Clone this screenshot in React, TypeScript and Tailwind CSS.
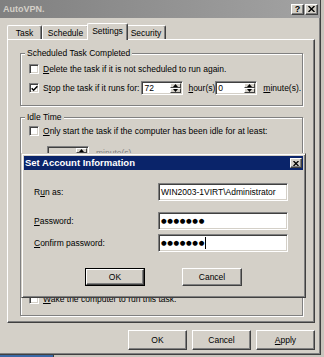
import React from "react";

const sunken =
  "border border-t-[#808080] border-l-[#808080] border-r-white border-b-white shadow-[inset_1px_1px_0_#404040,inset_-1px_-1px_0_#d4d0c8]";
const raised =
  "border border-t-white border-l-white border-r-[#404040] border-b-[#404040] shadow-[inset_-1px_-1px_0_#808080]";

const U = ({ children }: { children: React.ReactNode }) => (
  <span className="underline underline-offset-1">{children}</span>
);

const Check = ({ checked }: { checked?: boolean }) => (
  <span className={`inline-flex w-[10px] h-[10px] shrink-0 items-center justify-center bg-white ${sunken}`}>
    {checked && (
      <svg width="7" height="7" viewBox="0 0 7 7">
        <path d="M0.7 3.2 L2.6 5.2 L6.4 1.2" stroke="#000" strokeWidth="1.5" fill="none" />
      </svg>
    )}
  </span>
);

const SpinBtn = ({ up }: { up?: boolean }) => (
  <div className="flex-1 flex items-center justify-center bg-[#d4d0c8] border border-t-white border-l-white border-r-[#404040] border-b-[#404040]">
    <svg width="5" height="3" viewBox="0 0 5 3">
      <path d={up ? "M2.5 0 L5 3 L0 3 Z" : "M0 0 L5 0 L2.5 3 Z"} fill="#000" />
    </svg>
  </div>
);

const Spin = ({ value, disabled }: { value?: string; disabled?: boolean }) => (
  <div className={`flex w-[42px] h-[14px] p-px ${disabled ? "bg-[#d4d0c8]" : "bg-white"} ${sunken}`}>
    <span className="flex-1 pl-[1px] leading-[10px]">{value}</span>
    <div className="flex flex-col w-[11px]">
      <SpinBtn up />
      <SpinBtn />
    </div>
  </div>
);

const Row = ({ checked, className = "", children }: { checked?: boolean; className?: string; children: React.ReactNode }) => (
  <div className={`flex items-center h-[12px] pl-[8px] ${className}`}>
    <Check checked={checked} />
    <span className="ml-[4px] whitespace-nowrap">{children}</span>
  </div>
);

const Group = ({
  label,
  className,
  children,
}: {
  label: string;
  className: string;
  children: React.ReactNode;
}) => (
  <div
    className={`relative w-[283px] border border-[#808080] shadow-[inset_1px_1px_0_#fff,1px_1px_0_#fff] ${className}`}
  >
    <span className="absolute left-[4px] top-[-7px] px-[2px] bg-[#d4d0c8] leading-[12px] whitespace-nowrap">
      {label}
    </span>
    {children}
  </div>
);

const Button = ({ children, def, className }: { children: React.ReactNode; def?: boolean; className: string }) => (
  <div className={`flex ${className} ${def ? "border border-black" : ""}`}>
    <div className={`flex-1 flex items-center justify-center ${raised}`}>{children}</div>
  </div>
);

const Field = ({ children }: { children: React.ReactNode }) => (
  <div className={`w-[130px] h-[18px] bg-white flex items-center pl-[2px] ${sunken}`}>{children}</div>
);

const tabBase =
  "flex items-center justify-center border-l border-t border-r border-l-white border-t-white border-r-[#404040] shadow-[inset_-1px_0_0_#808080] rounded-t-[2px]";

export default function App() {
  return (
    <div className="relative w-[324px] h-[357px] overflow-hidden bg-[#c9c5bd] text-[8.5px] leading-[12px] text-black font-['Liberation_Sans',Arial,sans-serif]">
      <div className="relative w-[321px] h-[355px] bg-[#d4d0c8] border-r border-b border-r-[#404040] border-b-[#404040] shadow-[inset_-1px_-1px_0_#808080] flex flex-col">
        {/* caption */}
        <div className="h-[18px] flex items-center pl-[3px] pr-[2px] bg-gradient-to-r from-[#808080] to-[#a3a3a3]">
          <span className="flex-1 text-[9px] font-bold text-[#d4d0c8]">AutoVPN.</span>
          <div className={`w-[13px] h-[11px] flex items-center justify-center bg-[#d4d0c8] ${raised} text-[9px] font-bold leading-none`}>
            ?
          </div>
          <div className={`ml-[1px] w-[13px] h-[11px] flex items-center justify-center bg-[#d4d0c8] ${raised}`}>
            <svg width="7" height="6" viewBox="0 0 7 6">
              <path d="M0.5 0 L6.5 6 M6.5 0 L0.5 6" stroke="#000" strokeWidth="1.4" />
            </svg>
          </div>
        </div>

        <div className="pl-[7px] pt-[5px] flex flex-col">
          {/* tabs */}
          <div className="flex items-end h-[16px]">
            <div className={`${tabBase} w-[35px] h-[14px]`}>Task</div>
            <div className={`${tabBase} w-[47px] h-[14px]`}>Schedule</div>
            <div className={`${tabBase} relative z-10 w-[41px] h-[17px] -mx-[2px] mb-[-1px] bg-[#d4d0c8] pb-[2px]`}>
              Settings
            </div>
            <div className={`${tabBase} w-[40px] h-[14px]`}>Security</div>
          </div>

          {/* panel */}
          <div className={`w-[308px] h-[284px] pt-[13px] pl-[12px] flex flex-col ${raised}`}>
            <Group label="Scheduled Task Completed" className="h-[53px] pt-[9px]">
              <Row>
                <U>D</U>elete the task if it is not scheduled to run again.
              </Row>
              <div className="flex items-center h-[16px] mt-[5px] pl-[8px] whitespace-nowrap">
                <Check checked />
                <span className="ml-[4px]">
                  S<U>t</U>op the task if it runs for:
                </span>
                <div className="ml-[2px]">
                  <Spin value="72" />
                </div>
                <span className="ml-[5px]">
                  <U>h</U>our(s)
                </span>
                <Spin value="0" />
                <span className="ml-[6px]">
                  <U>m</U>inute(s).
                </span>
              </div>
            </Group>

            <Group label="Idle Time" className="mt-[11px] h-[199px] pt-[7px] pb-[10px] flex flex-col">
              <Row>
                <U>O</U>nly start the task if the computer has been idle for at least:
              </Row>
              <div className="flex items-center h-[16px] mt-[8px] pl-[26px]">
                <Spin disabled />
                <span className="ml-[7px] text-[#808080]">minute(s)</span>
              </div>
              <Row className="mt-auto">
                <U>W</U>ake the computer to run this task.
              </Row>
            </Group>
          </div>

          {/* footer buttons */}
          <div className="w-[308px] mt-[7px] flex justify-end gap-[5px]">
            <Button className="w-[59px] h-[20px]">OK</Button>
            <Button className="w-[59px] h-[20px]">Cancel</Button>
            <Button className="w-[59px] h-[20px]">
              <U>A</U>pply
            </Button>
          </div>
        </div>

        {/* modal dialog */}
        <div className="absolute left-[21px] top-[153px] w-[285px] h-[145px] p-[2px] bg-[#d4d0c8] border border-t-[#d4d0c8] border-l-[#d4d0c8] border-r-[#404040] border-b-[#404040] shadow-[inset_1px_1px_0_#fff,inset_-1px_-1px_0_#808080] flex flex-col">
          <div className="h-[14px] flex items-center pl-[1px] pr-[1px] bg-[#0a246a]">
            <span className="flex-1 text-[9.5px] font-bold text-white">Set Account Information</span>
            <div className={`w-[12px] h-[10px] flex items-center justify-center bg-[#d4d0c8] ${raised}`}>
              <svg width="6" height="5" viewBox="0 0 6 5">
                <path d="M0.5 0 L5.5 5 M5.5 0 L0.5 5" stroke="#000" strokeWidth="1.3" />
              </svg>
            </div>
          </div>
          <div className="pt-[13px] flex flex-col">
            <div className="flex items-center">
              <span className="w-[134px] pl-[10px]">
                R<U>u</U>n as:
              </span>
              <Field>WIN2003-1VIRT\Administrator</Field>
            </div>
            <div className="flex items-center mt-[11px]">
              <span className="w-[134px] pl-[10px]">
                <U>P</U>assword:
              </span>
              <Field>
                <span className="font-['DejaVu_Sans',sans-serif] text-[6.5px] tracking-[0.6px]">●●●●●●●</span>
              </Field>
            </div>
            <div className="flex items-center mt-[4px]">
              <span className="w-[134px] pl-[10px]">
                <U>C</U>onfirm password:
              </span>
              <Field>
                <span className="font-['DejaVu_Sans',sans-serif] text-[6.5px] tracking-[0.6px]">●●●●●●●</span>
                <span className="w-px h-[12px] bg-black" />
              </Field>
            </div>
            <div className="flex justify-center gap-[37px] mt-[16px]">
              <Button def className="w-[60px] h-[18px]">
                OK
              </Button>
              <Button className="w-[60px] h-[18px]">Cancel</Button>
            </div>
          </div>
        </div>
      </div>

      {/* desktop strip below */}
      <div className="flex h-[2px]">
        <div className="w-[53px] bg-[#3a6aa8]" />
        <div className="w-px bg-[#404040]" />
      </div>
    </div>
  );
}
